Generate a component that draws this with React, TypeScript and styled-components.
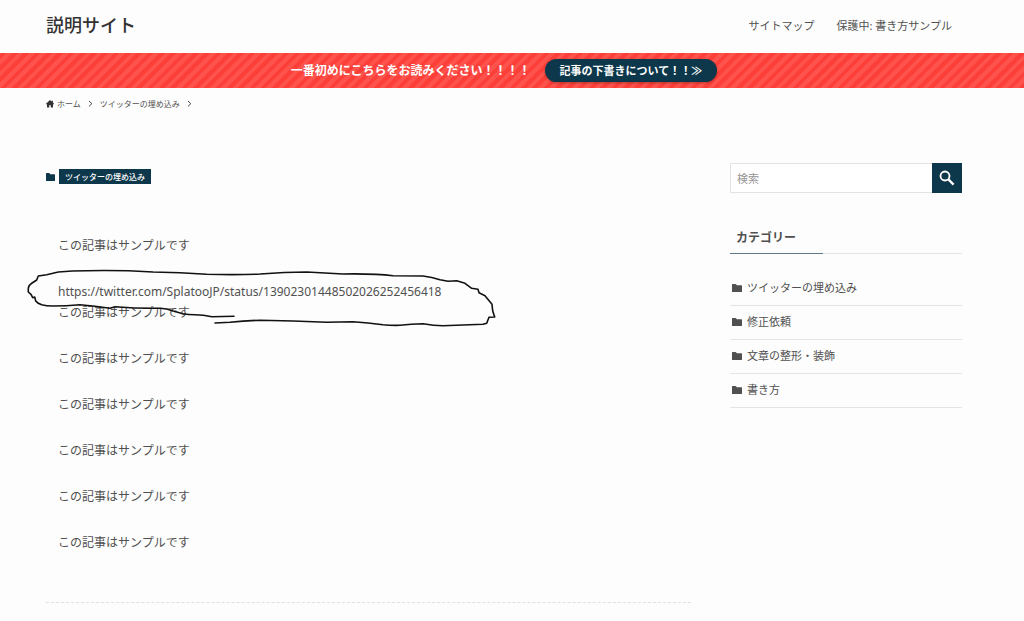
import React from "react";
import styled, { createGlobalStyle } from "styled-components";

const NAVY = "#0d384b";

const GlobalStyle = createGlobalStyle`
  *, *::before, *::after { box-sizing: border-box; }
  body {
    margin: 0;
    background: #fdfdfd;
    color: #505050;
    font-family: "Noto Sans", "Noto Sans CJK JP", sans-serif;
    font-size: 12px;
    line-height: 21px;
  }
  a { color: inherit; text-decoration: none; }
`;

const Header = styled.header`
  display: flex;
  align-items: center;
  justify-content: space-between;
  height: 53px;
  padding: 0 72px 2px 46px;
`;

const SiteTitle = styled.h1`
  margin: 0;
  font-size: 18px;
  font-weight: 500;
  line-height: 27px;
  color: #333;
`;

const Nav = styled.nav`
  display: flex;
  gap: 22px;
  font-size: 11px;
`;

const Notice = styled.div`
  display: flex;
  align-items: center;
  justify-content: center;
  gap: 14px;
  padding: 6px 62px 6px 46px;
  color: #fff;
  font-weight: 700;
  background: repeating-linear-gradient(
    -45deg,
    #fc4039 0,
    #fc4039 4px,
    #fd534c 4px,
    #fd534c 8px
  );
`;

const NoticeButton = styled.a`
  padding: 1px 15px;
  border-radius: 12px;
  background: ${NAVY};
  font-size: 11px;
  box-shadow: 0 1px 3px rgba(0, 0, 0, 0.3);
`;

const Breadcrumb = styled.nav`
  display: flex;
  align-items: center;
  gap: 7px;
  padding: 5px 62px 0 46px;
  font-size: 8px;
`;

const Crumb = styled.a`
  display: flex;
  align-items: center;
  gap: 3px;
`;

const Content = styled.div`
  display: flex;
  align-items: flex-start;
  gap: 39px;
  padding: 49px 62px 0 46px;
`;

const Main = styled.main`
  flex: 1;
  min-width: 0;
`;

const TagRow = styled.div`
  display: flex;
  align-items: center;
  gap: 4px;
  padding-top: 6px;
  color: ${NAVY};
`;

const Tag = styled.a`
  padding: 0 6px;
  background: ${NAVY};
  color: #fff;
  font-size: 8px;
  font-weight: 500;
  line-height: 15px;
`;

const Article = styled.article`
  position: relative;
  display: flex;
  flex-direction: column;
  gap: 25px;
  margin-top: 51px;
  padding: 0 12px 49px;
  border-bottom: 1px dashed #e0e0e0;
`;

const Paragraph = styled.p`
  margin: 0;
`;

const Scribble = styled.svg`
  position: absolute;
  left: -20px;
  top: 30px;
  pointer-events: none;
`;

const Sidebar = styled.aside`
  width: 232px;
`;

const SearchForm = styled.form`
  display: flex;
  height: 30px;
`;

const SearchInput = styled.input`
  flex: 1;
  min-width: 0;
  padding: 0 6px;
  border: 1px solid #e3e3e3;
  border-right: 0;
  border-radius: 0;
  background: #fff;
  color: #444;
  font: inherit;
  font-size: 11px;
  &::placeholder { color: #959595; }
`;

const SearchButton = styled.button`
  display: flex;
  align-items: center;
  justify-content: center;
  width: 30px;
  padding: 0;
  border: 0;
  background: ${NAVY};
  color: #fff;
`;

const SideTitle = styled.h2`
  margin: 34px 0 0;
  padding: 0 6px 6px;
  font-size: 12px;
  font-weight: 700;
  line-height: 21px;
  background: linear-gradient(90deg, #5d7886 40%, #e4e4e4 40%) left bottom / 100% 1px no-repeat;
`;

const CategoryList = styled.ul`
  margin: 18px 0 0;
  padding: 0;
  list-style: none;
`;

const CategoryItem = styled.li`
  border-bottom: 1px solid #e4e4e4;
`;

const CategoryLink = styled.a`
  display: flex;
  align-items: center;
  gap: 5px;
  padding: 5px 2px 7px;
  font-size: 11px;
`;

const Folder = ({ width = 10 }: { width?: number }) => (
  <svg width={width} height={8} viewBox="0 0 10 8" preserveAspectRatio="none" fill="currentColor" aria-hidden="true">
    <path d="M0 .5Q0 0 .5 0H3.5L5 1.3H9.5Q10 1.3 10 1.8V7.5Q10 8 9.5 8H.5Q0 8 0 7.5Z" />
  </svg>
);

const Home = () => (
  <svg width="8" height="8" viewBox="0 0 8 8" fill="#333" aria-hidden="true">
    <path d="M4 0L5.8 1.6V.8H6.9V2.6L8 3.8V4.3H7V7.6H4.8V5.2H3.2V7.6H1V4.3H0V3.8Z" />
  </svg>
);

const Chevron = () => (
  <svg width="5" height="7" viewBox="0 0 5 7" fill="none" stroke="#444" aria-hidden="true">
    <path d="M1 1L3.8 3.7L1 6.4" />
  </svg>
);

const SearchIcon = () => (
  <svg width="16" height="16" viewBox="0 0 16 16" fill="none" stroke="currentColor" aria-hidden="true">
    <circle cx="6" cy="6" r="4.5" strokeWidth="1.8" />
    <path d="M9.4 9.4L14.6 14.6" strokeWidth="2.2" />
  </svg>
);

const SAMPLE = "この記事はサンプルです";
const CATEGORIES = ["ツイッターの埋め込み", "修正依頼", "文章の整形・装飾", "書き方"];

export default function App() {
  return (
    <>
      <GlobalStyle />
      <Header>
        <SiteTitle>説明サイト</SiteTitle>
        <Nav>
          <a href="#sitemap">サイトマップ</a>
          <a href="#sample">保護中: 書き方サンプル</a>
        </Nav>
      </Header>
      <Notice>
        <span>一番初めにこちらをお読みください！！！！</span>
        <NoticeButton href="#draft">記事の下書きについて！！≫</NoticeButton>
      </Notice>
      <Breadcrumb aria-label="パンくず">
        <Crumb href="#home"><Home />ホーム</Crumb>
        <Chevron />
        <Crumb href="#twitter">ツイッターの埋め込み</Crumb>
        <Chevron />
      </Breadcrumb>
      <Content>
        <Main>
          <TagRow>
            <Folder width={9} />
            <Tag href="#twitter">ツイッターの埋め込み</Tag>
          </TagRow>
          <Article>
            <Paragraph>{SAMPLE}</Paragraph>
            <Paragraph>
              https://twitter.com/SplatooJP/status/13902301448502026252456418
              <br />
              {SAMPLE}
            </Paragraph>
            {[1, 2, 3, 4, 5].map((n) => (
              <Paragraph key={n}>{SAMPLE}</Paragraph>
            ))}
            <Scribble
              width="472"
              height="64"
              viewBox="26 264 472 64"
              fill="none"
              stroke="#111"
              strokeWidth="1.6"
              strokeLinejoin="round"
              strokeLinecap="round"
              aria-hidden="true"
            >
              <path d="M234 315.3L212 315.7Q203 314 195 313.8Q188 313.8 183 312.7L173 310Q167 307.5 160 307.3Q136 307.5 115 305.8L110 307.3Q95 305 80 303.7Q66 305 53 305Q46 305 41.700 303.700Q37 302 35.700 300L34.700 296L32.700 296.700L31 293.300L28.300 291V287Q29 284 31.700 282.300L36.700 279L38.300 275L46.700 273.700L58.300 271Q72 269.700 86.700 269.700Q120 269 153 271Q180 271.500 206.700 273.300Q240 274 260 273Q285 271 306.700 271Q325 272 343 273Q375 272.500 393 274.700L423 275Q432 276 440 278.700L448 280.300L456.700 279.700L465 282.300L471.700 287.300L478 288.300L479 291.700L485 294.700L492 303.300L492.700 310L494.700 316L489 316.300L486.700 322.300L483 323.300L443 324.700Q434 324.500 423 322.700Q411 323 400 324.300Q390 324.500 383 323.700Q368 321.500 353 320.700Q340 321 326.700 321.300Q293 320 260 319.300Q245 319.500 230 321.300L215 322" />
            </Scribble>
          </Article>
        </Main>
        <Sidebar>
          <SearchForm role="search" onSubmit={(e) => e.preventDefault()}>
            <SearchInput type="text" placeholder="検索" aria-label="検索" />
            <SearchButton type="submit" aria-label="検索を実行"><SearchIcon /></SearchButton>
          </SearchForm>
          <SideTitle>カテゴリー</SideTitle>
          <CategoryList>
            {CATEGORIES.map((name) => (
              <CategoryItem key={name}>
                <CategoryLink href="#category"><Folder />{name}</CategoryLink>
              </CategoryItem>
            ))}
          </CategoryList>
        </Sidebar>
      </Content>
    </>
  );
}
